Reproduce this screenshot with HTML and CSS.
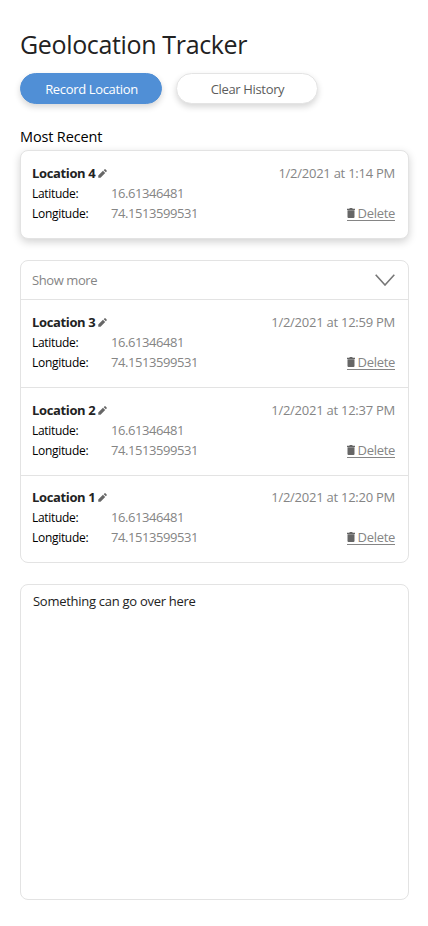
FILE: index.html
```html
<!DOCTYPE html>
<html lang="en">
<head>
<meta charset="utf-8">
<title>Geolocation Tracker</title>
<link rel="stylesheet" href="styles.css">
</head>
<body>
<svg width="0" height="0" class="sprite" aria-hidden="true">
  <symbol id="pencil" viewBox="0 0 10 10"><path d="M0.3 9.7V7.2L5.500 2 8 4.500 2.800 9.700zM6.300 1.300L7.300.4Q7.800 0 8.300.4L9.600 1.700Q10 2.200 9.600 2.700L8.700 3.700z"/></symbol>
  <symbol id="trash" viewBox="0 0 8 10"><path d="M0 .7H2.300L2.800 0H5.200L5.700.7H8V1.900H0zM.5 2.200H7.500V9Q7.500 10 6.500 10H1.500Q.5 10 .5 9z"/></symbol>
</svg>
<main class="page">
  <h1 class="title"><span>Geolocation Tracker</span></h1>
  <div class="actions">
    <button class="btn primary"><span>Record Location</span></button>
    <button class="btn"><span>Clear History</span></button>
  </div>
  <h2 class="subtitle"><span>Most Recent</span></h2>
  <section class="card recent">
    <article class="entry">
      <div class="row"><h3 class="name"><span>Location 4</span><svg class="pencil"><use href="#pencil"/></svg></h3><time class="time">1/2/2021 at 1:14 PM</time></div>
      <div class="row"><span class="label">Latitude:</span><span class="value">16.61346481</span></div>
      <div class="row"><span class="label">Longitude:</span><span class="value">74.1513599531</span><a class="delete"><svg class="trash"><use href="#trash"/></svg><span>Delete</span></a></div>
    </article>
  </section>
  <section class="card history">
    <div class="more"><span>Show more</span><svg class="chevron" viewBox="0 0 20 12"><path d="M.7.8L10 11 19.300.8"/></svg></div>
    <article class="entry">
      <div class="row"><h3 class="name"><span>Location 3</span><svg class="pencil"><use href="#pencil"/></svg></h3><time class="time">1/2/2021 at 12:59 PM</time></div>
      <div class="row"><span class="label">Latitude:</span><span class="value">16.61346481</span></div>
      <div class="row"><span class="label">Longitude:</span><span class="value">74.1513599531</span><a class="delete"><svg class="trash"><use href="#trash"/></svg><span>Delete</span></a></div>
    </article>
    <article class="entry">
      <div class="row"><h3 class="name"><span>Location 2</span><svg class="pencil"><use href="#pencil"/></svg></h3><time class="time">1/2/2021 at 12:37 PM</time></div>
      <div class="row"><span class="label">Latitude:</span><span class="value">16.61346481</span></div>
      <div class="row"><span class="label">Longitude:</span><span class="value">74.1513599531</span><a class="delete"><svg class="trash"><use href="#trash"/></svg><span>Delete</span></a></div>
    </article>
    <article class="entry last">
      <div class="row"><h3 class="name"><span>Location 1</span><svg class="pencil"><use href="#pencil"/></svg></h3><time class="time">1/2/2021 at 12:20 PM</time></div>
      <div class="row"><span class="label">Latitude:</span><span class="value">16.61346481</span></div>
      <div class="row"><span class="label">Longitude:</span><span class="value">74.1513599531</span><a class="delete"><svg class="trash"><use href="#trash"/></svg><span>Delete</span></a></div>
    </article>
  </section>
  <section class="card panel"><span>Something can go over here</span></section>
</main>
</body>
</html>
```
FILE: styles.css
```css
* { box-sizing: border-box; }
body { margin: 0; background: #fff; color: #222; font-family: "Open Sans", "Noto Sans", sans-serif; font-size: 13px; line-height: 20px; white-space: nowrap; }
.sprite { display: block; }
.page { padding: 26px 19px 26px 20px; }
h1, h2, h3 { margin: 0; font-weight: 400; }
.title { height: 36px; font-size: 25px; line-height: 36px; letter-spacing: -0.35px; }
.actions { display: flex; gap: 14px; margin-top: 11px; }
.btn { width: 142px; height: 31px; padding: 0 0 0 1px; border: 1px solid #e4e4e4; border-radius: 16px; background: #fff; color: #5c5c5c; font: inherit; letter-spacing: -0.34px; box-shadow: 0 3px 6px rgba(0,0,0,.16); }
.btn.primary { background: #508fd6; border-color: #508fd6; color: #fff; }
.subtitle { height: 20px; margin-top: 23px; color: #000; font-size: 14.5px; letter-spacing: -0.15px; }
.card { border: 1px solid #e3e3e3; border-radius: 8px; background: #fff; }
.recent { height: 89px; margin-top: 3px; box-shadow: 0 3px 8px rgba(0,0,0,.18); }
.history { height: 303px; margin-top: 21px; }
.more { display: flex; height: 39px; align-items: center; justify-content: space-between; padding: 0 13px 0 11px; border-bottom: 1px solid #e3e3e3; color: #858585; letter-spacing: -0.42px; }
.chevron { width: 20px; height: 12px; fill: none; stroke: #777; stroke-width: 1.6; }
.entry { height: 88px; padding: 12px 13px 0 11px; border-bottom: 1px solid #e3e3e3; }
.recent .entry, .entry.last { border-bottom: 0; }
.entry.last { height: 86px; padding-top: 11px; }
.row { display: flex; height: 20px; align-items: center; }
.name { display: flex; align-items: center; font-size: 13px; font-weight: 700; letter-spacing: -0.36px; }
.pencil { width: 9px; height: 9px; margin-left: 3px; fill: #666; }
.time { margin-left: auto; color: #858585; letter-spacing: -0.25px; }
.label { width: 79px; padding-top: 2px; color: #000; font-size: 12px; letter-spacing: -0.3px; }
.value { color: #858585; letter-spacing: -0.43px; }
.delete { display: flex; height: 15px; margin-left: auto; align-items: center; border-bottom: 1px solid #858585; color: #858585; letter-spacing: -0.3px; }
.trash { width: 8px; height: 10px; margin-right: 3px; fill: #666; }
.panel { height: 316px; margin-top: 21px; padding: 6px 12px; letter-spacing: -0.28px; }
```
